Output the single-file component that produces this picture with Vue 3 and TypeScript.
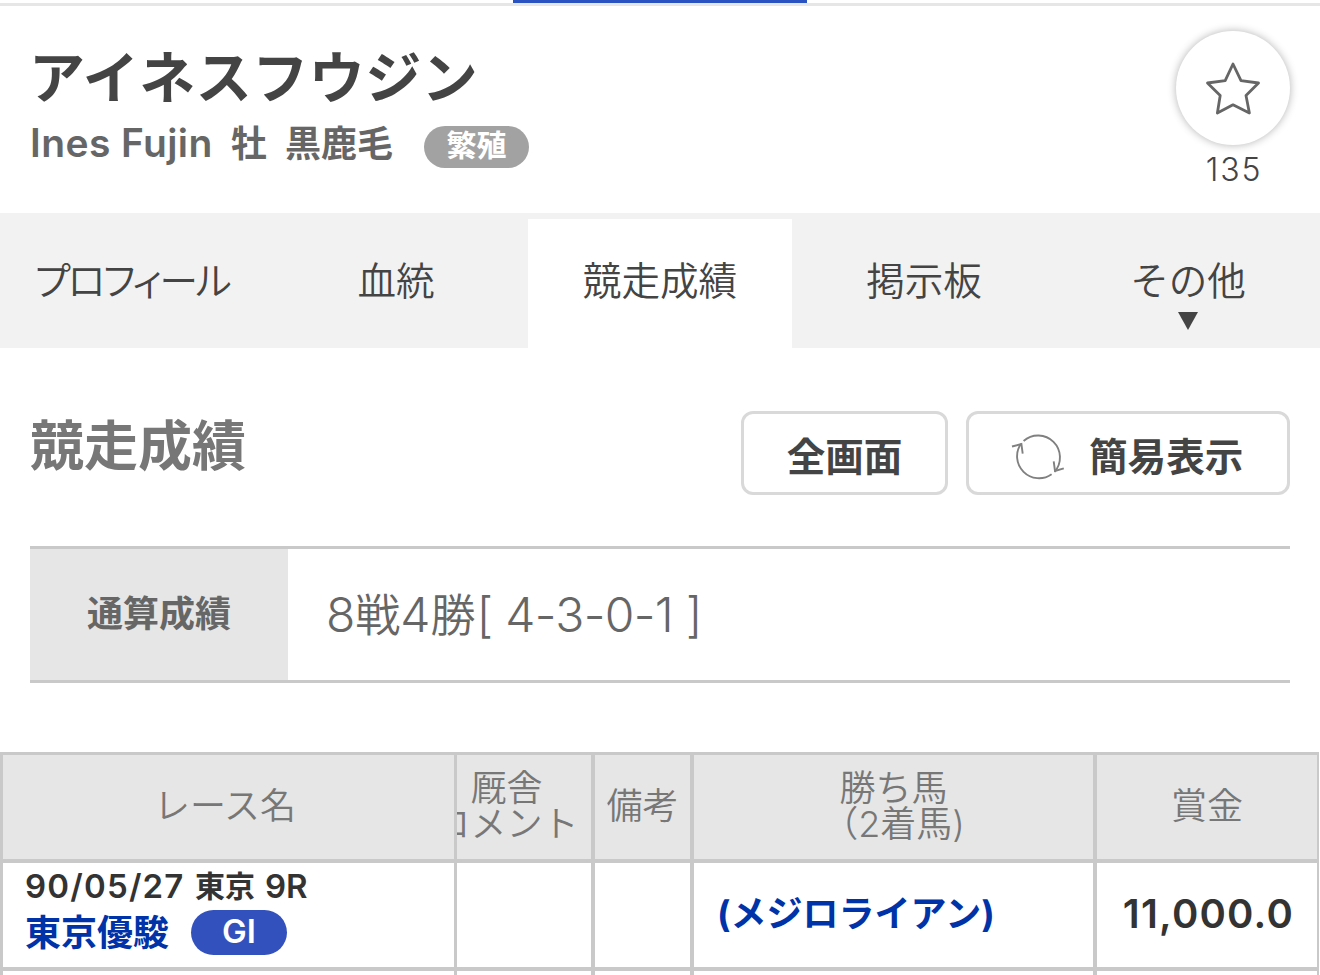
<template>
  <div class="page">
    <div class="top-line"><span class="top-current"></span></div>

    <!-- 馬名 -->
    <header class="horse-head">
      <div class="horse-info">
        <h1 class="horse-name">アイネスフウジン</h1>
        <div class="horse-sub">
          <span class="eng">Ines Fujin</span>
          <span class="sex">牡</span>
          <span class="coat">黒鹿毛</span>
          <span class="status">繁殖</span>
        </div>
      </div>
      <div class="favorite">
        <button class="fav-btn" aria-label="お気に入り">
          <svg width="56" height="54" viewBox="0 0 56 54">
            <path
              d="M28 3 L36 19.6 L53.5 22 L41 34.5 L44.4 52 L28 43.8 L12.4 52 L15.2 34.5 L2.5 22 L20.2 19.6 Z"
              fill="none"
              stroke="#666"
              stroke-width="2.8"
              stroke-linejoin="round"
            />
          </svg>
        </button>
        <span class="fav-count">{{ favCount }}</span>
      </div>
    </header>

    <nav class="tabs">
      <a
        v-for="tab in tabs"
        :key="tab.label"
        class="tab"
        :class="{ active: tab.label === current, kana: tab.kana }"
        @click="current = tab.label"
      >
        <span>{{ tab.label }}</span>
        <i v-if="tab.more" class="arrow"></i>
      </a>
    </nav>

    <section class="result-head">
      <h2>競走成績</h2>
      <div class="btns">
        <button class="btn full"><span>全画面</span></button>
        <button class="btn simple">
          <svg width="54" height="50" viewBox="0 0 54 50" fill="none" stroke="#808080" stroke-width="1.9">
            <path d="M12.6 10 A21.9 21.9 0 0 1 43.6 40.8" />
            <path d="M40.6 43.2 A21.9 21.9 0 0 1 10 12.8" />
            <path d="M1 15.5 L10.4 13 L11.7 22.7" />
            <path d="M42.7 30.3 L44 40 L52.8 37.3" />
          </svg>
          <span>簡易表示</span>
        </button>
      </div>
    </section>

    <dl class="total">
      <dt>通算成績</dt>
      <dd>8<b>戦</b>4<b>勝</b><span>[ 4-3-0-1 ]</span></dd>
    </dl>

    <div class="race-table">
      <div class="row head">
        <div class="cell name">レース名</div>
        <div class="cell comment"><span>厩舎<br />コメント</span></div>
        <div class="cell">備考</div>
        <div class="cell"><span>勝ち馬<br />（2着馬)</span></div>
        <div class="cell">賞金</div>
      </div>
      <div v-for="race in races" :key="race.name" class="row">
        <div class="cell race">
          <div class="race-date">
            <span class="date">{{ race.date }}</span>
            <span class="course">{{ race.course }}</span>
            <span class="num">{{ race.num }}</span>
          </div>
          <div class="race-name">
            <a>{{ race.name }}</a>
            <span class="grade">{{ race.grade }}</span>
          </div>
        </div>
        <div class="cell"></div>
        <div class="cell"></div>
        <div class="cell winner"><a>({{ race.winner }})</a></div>
        <div class="cell prize">{{ race.prize }}</div>
      </div>
      <div class="row">
        <div v-for="n in 5" :key="n" class="cell"></div>
      </div>
    </div>
  </div>
</template>

<script setup lang="ts">
import { ref } from 'vue'

interface Tab {
  label: string
  kana?: boolean
  more?: boolean
}

interface Race {
  date: string
  course: string
  num: string
  name: string
  grade: string
  winner: string
  prize: string
}

const favCount = ref(135)
const current = ref('競走成績')

const tabs: Tab[] = [
  { label: 'プロフィール', kana: true },
  { label: '血統' },
  { label: '競走成績' },
  { label: '掲示板' },
  { label: 'その他', more: true }
]

const races: Race[] = [
  {
    date: '90/05/27',
    course: '東京',
    num: '9R',
    name: '東京優駿',
    grade: 'GI',
    winner: 'メジロライアン',
    prize: '11,000.0'
  }
]
</script>

<style>
body {
  margin: 0;
  background: #fff;
}
</style>

<style scoped>
.page {
  width: 1320px;
  height: 975px;
  overflow: hidden;
  color: #444;
  font-family: Inter, 'Noto Sans CJK JP', sans-serif;
}
button {
  padding: 0;
  background: #fff;
  font-family: inherit;
  color: inherit;
}

/* 上部ライン */
.top-line {
  box-sizing: border-box;
  height: 6px;
  border-bottom: 3px solid #e6e6e6;
}
.top-current {
  display: block;
  width: 294px;
  height: 3px;
  margin-left: 513px;
  background: #2a53c1;
}

/* 馬名 */
.horse-head {
  box-sizing: border-box;
  display: flex;
  justify-content: space-between;
  height: 207px;
  padding: 24px 29px 0 30px;
}
.horse-name {
  margin: 12px 0 0 -1px;
  font-size: 56px;
  line-height: 72px;
  font-weight: 700;
  letter-spacing: 0.5px;
}
.horse-sub {
  display: flex;
  align-items: center;
  height: 60px;
  color: #666;
  font-size: 36px;
  font-weight: 600;
  line-height: 60px;
  white-space: nowrap;
}
.eng {
  width: 201px;
  margin-top: -3px;
  font-size: 39px;
  letter-spacing: 0.4px;
}
.sex {
  width: 54px;
}
.coat {
  width: 139px;
}
.status {
  width: 105px;
  height: 42px;
  margin-top: 6px;
  border-radius: 21px;
  background: #a2a2a2;
  color: #fff;
  font-size: 30px;
  line-height: 38px;
  text-align: center;
}
.favorite {
  display: flex;
  flex-direction: column;
  align-items: center;
  width: 116px;
}
.fav-btn {
  display: flex;
  align-items: center;
  justify-content: center;
  width: 114px;
  height: 114px;
  margin-top: 1px;
  border: 0;
  border-radius: 50%;
  box-shadow: 0 0 9px rgba(0, 0, 0, 0.3);
}
.fav-count {
  margin-top: 9px;
  padding-left: 2px;
  font-size: 32px;
  line-height: 32px;
  font-weight: 300;
  letter-spacing: 1.8px;
}

/* タブ */
.tabs {
  display: flex;
  height: 129px;
  padding-top: 6px;
  background: #f2f2f2;
}
.tab {
  display: flex;
  flex-direction: column;
  align-items: center;
  width: 264px;
  padding-top: 33px;
  box-sizing: border-box;
  font-size: 38.6px;
  line-height: 58px;
  font-weight: 350;
  white-space: nowrap;
  cursor: pointer;
}
.tab.active {
  background: #fff;
}
.tab.kana {
  font-feature-settings: 'palt';
  letter-spacing: -2.3px;
}
.arrow {
  margin-top: 2px;
  border: 10px solid transparent;
  border-top: 18px solid #444;
  border-bottom: 0;
}

/* 見出し */
.result-head {
  display: flex;
  justify-content: space-between;
  height: 135px;
  padding: 63px 30px 0;
}
h2 {
  margin: 0;
  color: #777;
  font-size: 54px;
  line-height: 72px;
  font-weight: 700;
}
.btns {
  display: flex;
  gap: 18px;
}
.btn {
  box-sizing: border-box;
  display: flex;
  align-items: center;
  height: 84px;
  border: 3px solid #d9d9d9;
  border-radius: 12px;
  font-size: 38.6px;
  line-height: 78px;
  font-weight: 700;
}
.btn span {
  margin-top: 7px;
}
.btn.full {
  justify-content: center;
  width: 207px;
}
.btn.simple {
  width: 324px;
  padding-left: 42px;
}
.btn svg {
  margin: 6px 24px 0 0;
}

/* 通算成績 */
.total {
  display: flex;
  height: 131px;
  margin: 0 30px 69px;
  border-top: 3px solid #c9c9c9;
  border-bottom: 3px solid #c9c9c9;
  color: #666;
}
.total dt {
  width: 258px;
  background: #e6e6e6;
  font-size: 36px;
  line-height: 131px;
  font-weight: 700;
  text-align: center;
}
.total dd {
  margin: 0 0 0 38px;
  font-size: 48px;
  line-height: 131px;
  font-weight: 300;
  white-space: pre;
}
.total dd b {
  font-size: 45px;
  font-weight: 350;
}
.total dd span {
  margin-left: 1px;
  letter-spacing: -0.7px;
}

/* レース表 */
.race-table {
  width: 1316px;
  border-top: 3px solid #c9c9c9;
  border-left: 3px solid #c9c9c9;
}
.row {
  display: grid;
  grid-template-columns: 454px 138px 99px 403px 222px;
  height: 108px;
}
.cell {
  display: flex;
  align-items: center;
  justify-content: center;
  box-sizing: border-box;
  overflow: hidden;
  border-right: 4px solid #c9c9c9;
  border-bottom: 4px solid #c9c9c9;
  white-space: nowrap;
}
.cell:first-child {
  border-right-width: 3px;
}
.cell:last-child {
  border-right-width: 2px;
}
.head .cell {
  padding-bottom: 2px;
  background: #e6e6e6;
  color: #777;
  font-size: 36px;
  line-height: 36px;
  font-weight: 350;
  text-align: center;
}
.head .name {
  padding-right: 7px;
}
.head .comment {
  padding-right: 35px;
}
.race.cell {
  flex-direction: column;
  align-items: flex-start;
  justify-content: flex-start;
  padding-left: 22px;
}
.race-date {
  display: flex;
  height: 47px;
  color: #333;
  font-size: 30px;
  line-height: 47px;
  font-weight: 600;
}
.date,
.num {
  font-size: 33px;
}
.date {
  width: 170px;
  letter-spacing: 1.2px;
}
.course {
  width: 70px;
}
.race-name {
  display: flex;
  align-items: center;
  height: 45px;
}
.cell a {
  color: #0032a8;
  font-size: 36px;
  line-height: 46px;
  font-weight: 700;
}
.grade {
  width: 96px;
  height: 45px;
  margin-left: 22px;
  border-radius: 23px;
  background: #3351bd;
  color: #fff;
  font-size: 33px;
  line-height: 43px;
  font-weight: 600;
  text-align: center;
}
.winner.cell {
  justify-content: flex-start;
  padding: 0 0 2px 23px;
}
.prize {
  justify-content: flex-end;
  padding: 0 23px 3px 0;
  color: #333;
  font-size: 40px;
  font-weight: 600;
  letter-spacing: 1.2px;
}
</style>
